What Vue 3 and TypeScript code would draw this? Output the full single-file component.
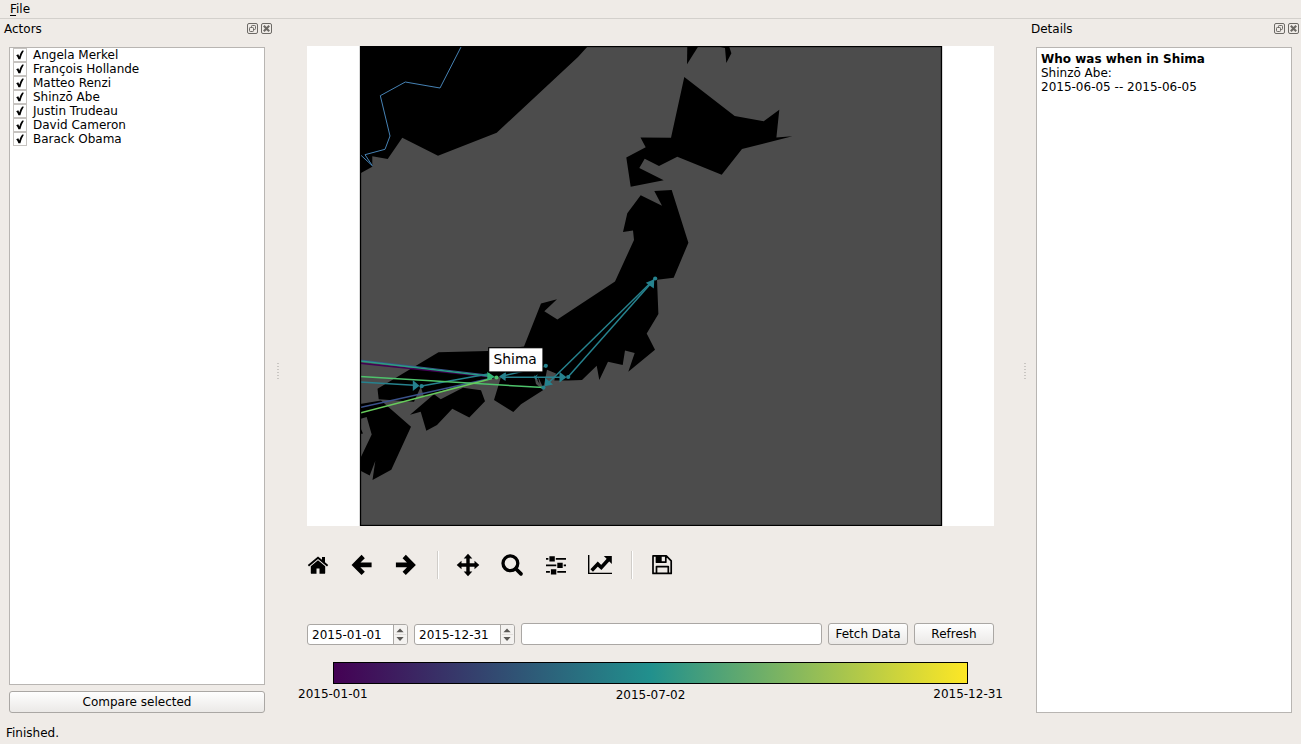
<script setup lang="ts">
import { ref } from 'vue'

interface Actor { name: string; checked: boolean }
interface Link { x1: number; y1: number; x2: number; y2: number; color: string; width: number }

const actors = ref<Actor[]>([
  'Angela Merkel', 'François Hollande', 'Matteo Renzi', 'Shinzō Abe',
  'Justin Trudeau', 'David Cameron', 'Barack Obama',
].map((name) => ({ name, checked: true })))

const land: string[] = [
  // mainland
  '360,46 588,46 578,57 496.7,132.7 438,155.7 402.3,137.7 387.7,159 372.3,156.3 372.3,166.7 360,173.5',
  // Sakhalin and Kunashir
  '687.3,46 698.5,46 687,64.3',
  '716,46 729,46 731.4,53.3 726.3,63 725,48',
  // Hokkaido
  '684.3,77 734.7,116 763.7,121.2 779.3,109.7 776.4,137.5 792.3,136.3 742,149 721.7,174.7 677.3,156.7 659,166 644.7,158.7 639.3,168 663.7,180.3 630.7,186.8 626.3,157.5 645.7,147.3 640.5,137.4 671,137.8',
  // Honshu
  '654.3,191 671.7,190 688.4,242.7 673.7,277.8 657,279.7 658.4,314 646.7,333.5 655,349.7 628.3,371.7 634.7,353 625,350.5 622.7,365 608,361.8 599.3,380 596.7,365.7 582,380 568,380.5 554.3,380.5 556,373.5 547,369.8 543.4,388.3 537.8,376 539.6,384 534,374.5 536,384 543.3,390 521,404.3 513.3,412 494,400 501,377 463,384 424,397 420.8,386.7 414,401.7 378.7,399.3 377.5,388.8 438.5,352.3 488,351 524,346.5 541,303.4 557,299.2 544.3,311.2 557.4,319.6 615,281.5 634,240 633,230.5 623,232 627.3,213.3 640.7,195.3 662,205.8',
  // Shikoku
  '410,414.7 434,394.3 440.7,399.3 463,387.7 481,390.3 485,401.3 469.3,417.5 452.3,408.8 437,425 426.3,430.8 420.7,411.7',
  // Kyushu
  '360,404 381,400.5 411,426.7 391.3,469.7 372.5,480 375.3,461 369.7,475.5 360,470.5 360,459 371.7,434.5 366.7,417 360,419',
  '360,427 363,433.5 360,434',
]

const teal = '#26828e'
const links: Link[] = [
  { x1: 360, y1: 360, x2: 492, y2: 375.5, color: '#3b528b', width: 1.2 },
  { x1: 360, y1: 363.3, x2: 492, y2: 377, color: '#440154', width: 1.6 },
  { x1: 360, y1: 361, x2: 492, y2: 376.5, color: '#2a9d87', width: 1.4 },
  { x1: 360, y1: 382, x2: 414, y2: 385.3, color: teal, width: 1.4 },
  { x1: 421.5, y1: 386, x2: 488, y2: 374, color: teal, width: 1.5 },
  { x1: 502, y1: 376.2, x2: 545.7, y2: 366, color: teal, width: 1.4 },
  { x1: 502, y1: 377.2, x2: 562, y2: 377.2, color: teal, width: 1.4 },
  { x1: 568, y1: 377, x2: 651, y2: 283.3, color: teal, width: 1.5 },
  { x1: 655, y1: 278.5, x2: 549, y2: 382.3, color: teal, width: 1.5 },
  { x1: 360, y1: 407.5, x2: 490, y2: 378.5, color: '#3b528b', width: 1.4 },
  { x1: 360, y1: 376.5, x2: 543.5, y2: 387.6, color: '#4ec36b', width: 1.5 },
  { x1: 360, y1: 413, x2: 492, y2: 378.5, color: '#67cc5c', width: 1.5 },
]
const heads: { points: string; color: string }[] = [
  { points: '412.8,380 419.5,385.7 412.8,391', color: teal },
  { points: '559.5,371.8 566.5,377.2 559.5,382.5', color: teal },
  { points: '499,376.5 506,371.8 505.5,381', color: teal },
  { points: '533,377.2 538,374.3 536,377.2 538,380.5', color: teal },
  { points: '544.8,386.3 545.2,377.8 553,384.5', color: teal },
  { points: '654.3,279.3 645.8,282.8 653.8,288.5', color: teal },
  { points: '487.3,371.8 495,377 487.3,380.6', color: '#35b779' },
]
const dots: { x: number; y: number; color: string }[] = [
  { x: 421.6, y: 386.2, color: teal },
  { x: 568.2, y: 377, color: teal },
  { x: 545.8, y: 365.8, color: teal },
  { x: 543.4, y: 387.6, color: teal },
  { x: 655.2, y: 278.5, color: teal },
  { x: 496.5, y: 377.5, color: '#4ec36b' },
]

const startDate = ref('2015-01-01')
const endDate = ref('2015-12-31')
const query = ref('')
const titles = ['Actors', 'Details']
</script>

<template>
  <div class="window">
    <nav class="menubar"><span><u>F</u>ile</span></nav>

    <div class="workspace">
      <aside class="dock">
        <header class="dock-title">
          <span>{{ titles[0] }}</span>
          <svg class="dock-btns" width="26" height="12" viewBox="0 0 26 12">
            <g fill="none" stroke="#6d6a66">
              <rect x=".5" y=".5" width="10" height="10" rx="1.5" /><rect x="14.5" y=".5" width="10" height="10" rx="1.5" />
              <rect x="4.5" y="2.5" width="4" height="4" rx=".8" /><rect x="2.5" y="4.5" width="4" height="4" rx=".8" fill="#efebe7" />
              <path d="M16.8 2.8l5.4 5.4M22.2 2.8l-5.4 5.4" stroke-width="2.1" />
            </g>
          </svg>
        </header>
        <ul class="panel list">
          <li v-for="a in actors" :key="a.name" @click="a.checked = !a.checked">
            <span class="check">
              <svg v-if="a.checked" width="12" height="12" viewBox="0 0 12 12">
                <path d="M2.2 6.2L4.3 5.2L5.3 7.4C6 5 7 2.8 8.3 1.5L9.9 1.7C8.3 4.2 7.1 7 6.4 10.2H4.4C3.9 8.6 3.2 7.3 2.2 6.2z" />
              </svg>
            </span>
            <span>{{ a.name }}</span>
          </li>
        </ul>
        <button class="btn compare">Compare selected</button>
      </aside>

      <div class="handle"><i v-for="n in 6" :key="n" /></div>

      <main class="center">
        <svg class="map" width="687" height="480" viewBox="307 46 687 480">
          <defs><clipPath id="axes"><rect x="360" y="46" width="582" height="480" /></clipPath></defs>
          <rect x="307" y="46" width="687" height="480" fill="#fff" />
          <rect x="360" y="46" width="582" height="480" fill="#4c4c4c" />
          <g clip-path="url(#axes)">
            <polygon v-for="(p, i) in land" :key="i" :points="p" />
            <polyline points="461,47 440,88 405.3,82 380.3,95.7 390,136 385,149.3 365,154.7 372.3,165.7 361,155.3" fill="none" stroke="#4682b4" />
            <line v-for="(l, i) in links" :key="i" :x1="l.x1" :y1="l.y1" :x2="l.x2" :y2="l.y2" :stroke="l.color" :stroke-width="l.width" />
            <polygon v-for="(h, i) in heads" :key="i" :points="h.points" :fill="h.color" />
            <circle v-for="(d, i) in dots" :key="i" :cx="d.x" :cy="d.y" r="2.1" :fill="d.color" />
          </g>
          <rect x="360.5" y="46.5" width="581" height="479" fill="none" stroke="#000" stroke-width="1.3" />
          <rect x="488.7" y="347.7" width="54.3" height="24.3" fill="#fff" stroke="#000" stroke-width="1.2" />
          <text x="493.6" y="364" class="map-label">Shima</text>
        </svg>

        <div class="toolbar">
          <svg viewBox="0 0 24 24">
            <path d="M12 3.4L1.8 12l1.2 1.5 9-7.6 9 7.6 1.2-1.5-3.2-2.7V4h-3v2.8z" />
            <path d="M12 7.2l-7.2 6.1v6.6q0 .9.9.9h4.8v-5.2h3v5.2h4.8q.9 0 .9-.9v-6.6z" />
          </svg>
          <svg viewBox="0 0 24 24"><path d="M13.2 3.5L4.8 11.9l8.4 8.4M5.8 11.9h15.8" class="arrow" /></svg>
          <svg viewBox="0 0 24 24"><path d="M10.2 3.5l8.4 8.4-8.4 8.4M17.6 11.9H1.9" class="arrow" /></svg>
          <i class="sep" />
          <svg viewBox="0 0 24 24"><path d="M12 .7l4.3 4.8h-2.6v4.8h4.8V7.7l4.8 4.3-4.8 4.3v-2.6h-4.8v4.8h2.6L12 23.3l-4.3-4.8h2.6v-4.8H5.5v2.6L.7 12l4.8-4.3v2.6h4.8V5.5H7.7z" /></svg>
          <svg viewBox="0 0 24 24"><g fill="none" stroke="#000"><circle cx="10.4" cy="10.3" r="7.4" stroke-width="3.3" /><path d="M15.8 15.7l5.2 5.2" stroke-width="3.7" stroke-linecap="round" /></g></svg>
          <svg viewBox="0 0 24 24">
            <path d="M2 5.8h20M2 12.3h20M2 18.8h20" stroke="#000" stroke-width="1.7" />
            <path d="M4.4 2.8h7.4v6H4.4zM12.3 9.3h7.4v6h-7.4zM5.9 15.8h7.4v6H5.9z" fill="#efebe7" />
            <path d="M5.4 3.2h5.4v5.2H5.4zM13.3 9.7h5.4v5.2h-5.4zM6.9 16.2h5.4v5.2H6.9z" />
          </svg>
          <svg viewBox="0 0 24 24"><path d="M.7 2v18.4H24" fill="none" stroke="#000" stroke-width="1.4" /><path d="M3.7 17.4l6.1-6.3 3.5 3.4 7.2-8" fill="none" stroke="#000" stroke-width="3.6" /><path d="M15.8 3h8v8z" /></svg>
          <i class="sep" />
          <svg viewBox="0 0 24 24">
            <path d="M3 2.9h13.3l4.9 4.9v12.6H3zM6.5 20v-6.4h11.8V20M6.5 3v6.2h9.3V3" fill="none" stroke="#000" stroke-width="1.7" stroke-linejoin="round" />
            <path d="M7 3h4.7v6H7z" />
          </svg>
        </div>

        <div class="controls">
          <div v-for="(d, i) in [startDate, endDate]" :key="i" class="spin">
            <span>{{ d }}</span>
            <svg width="14" height="19" viewBox="0 0 14 19" fill="#5a5855"><path d="M2.6 7.2L6.5 3l3.9 4.2zM2.6 12.2h7.8L6.5 16.4z" /><path d="M1 9.5h12" stroke="#dedbd8" /></svg>
          </div>
          <input v-model="query" class="query" type="text" />
          <button class="btn small">Fetch Data</button>
          <button class="btn small">Refresh</button>
        </div>

        <div class="scale">
          <div class="gradient" />
          <div class="ticks"><span>{{ startDate }}</span><span class="mid">2015-07-02</span><span>{{ endDate }}</span></div>
        </div>
      </main>

      <div class="handle"><i v-for="n in 6" :key="n" /></div>

      <aside class="dock">
        <header class="dock-title">
          <span>{{ titles[1] }}</span>
          <svg class="dock-btns" width="26" height="12" viewBox="0 0 26 12">
            <g fill="none" stroke="#6d6a66">
              <rect x=".5" y=".5" width="10" height="10" rx="1.5" /><rect x="14.5" y=".5" width="10" height="10" rx="1.5" />
              <rect x="4.5" y="2.5" width="4" height="4" rx=".8" /><rect x="2.5" y="4.5" width="4" height="4" rx=".8" fill="#efebe7" />
              <path d="M16.8 2.8l5.4 5.4M22.2 2.8l-5.4 5.4" stroke-width="2.1" />
            </g>
          </svg>
        </header>
        <div class="panel details">
          <b>Who was when in Shima</b>
          <div>Shinzō Abe:</div>
          <div>2015-06-05 -- 2015-06-05</div>
        </div>
      </aside>
    </div>

    <footer class="status">Finished.</footer>
  </div>
</template>

<style>
body { margin: 0; background: #efebe7; }
</style>

<style scoped>
* { box-sizing: border-box; }
.window {
  width: 1301px; height: 744px; display: flex; flex-direction: column;
  background: #efebe7; color: #000; overflow: hidden;
  font: 12px/14px "DejaVu Sans", sans-serif;
}
.menubar { height: 19px; padding: 2px 10px 0; border-bottom: 1px solid #d3d0cc; }
.menubar u { text-underline-offset: 2px; }
.workspace { flex: 1; min-height: 0; display: flex; }
.dock { width: 274px; display: flex; flex-direction: column; padding-bottom: 9px; }
.dock-title { height: 28px; padding: 3px 1px 0 4px; display: flex; justify-content: space-between; }
.dock-btns { margin-top: 1px; }
.panel { flex: 1; margin: 0 9px; background: #fff; border: 1px solid #b8b5b2; }
.list { list-style: none; padding: 0; }
.list li { height: 14px; display: flex; gap: 6px; padding-left: 3px; }
.check { width: 14px; height: 14px; border: 1px solid #c6c3c0; flex: none; }
.check svg { display: block; }
.btn {
  font: inherit; color: inherit; padding: 0 0 1px; height: 22px;
  border: 1px solid #aaa7a4; border-radius: 3px;
  background: linear-gradient(#fefefe, #ebe9e7);
}
.compare { margin: 6px 9px 0; }
.handle { width: 6px; padding-left: 2px; display: flex; flex-direction: column; align-items: center; justify-content: center; gap: 2px; }
.handle i { width: 2px; height: 1px; background: #c9c6c2; }
.center { flex: 1; min-width: 0; padding: 27px 27px 0; }
.map { display: block; }
.map-label { font: 13.8px "DejaVu Sans", sans-serif; }
.toolbar { height: 60px; margin: 9px 0 0 -11px; display: flex; align-items: center; }
.toolbar svg { width: 24px; height: 24px; margin: 0 10px; flex: none; }
.sep { width: 2px; height: 28px; margin: 0 7px 0 9px; border-left: 1px solid #d0cdc9; border-right: 1px solid #fff; }
.arrow { fill: none; stroke: #000; stroke-width: 4.6; }
.controls { margin-top: 28px; display: flex; gap: 6px; align-items: flex-end; }
.spin {
  width: 101px; height: 21px; display: flex; justify-content: space-between;
  border: 1px solid #aaa7a4; border-radius: 3px; background: #fff; overflow: hidden;
}
.spin span { padding: 3px 0 0 4px; }
.spin svg { border-left: 1px solid #aaa7a4; background: #f4f2f0; }
.query { width: 301px; height: 22px; border: 1px solid #aaa7a4; border-radius: 3px; background: #fff; outline: none; }
.small { width: 80px; }
.scale { margin-top: 17px; }
.gradient {
  height: 22px; margin: 0 26px; border: 1px solid #000;
  background: linear-gradient(90deg, #440154, #21908d 50%, #fde725);
}
.ticks { display: flex; justify-content: space-between; margin: 3px -9px 0; }
.mid { padding-top: 1px; }
.details { padding: 4px; }
.details b { display: block; }
.status { height: 22px; padding: 4px 6px 0; }
</style>
